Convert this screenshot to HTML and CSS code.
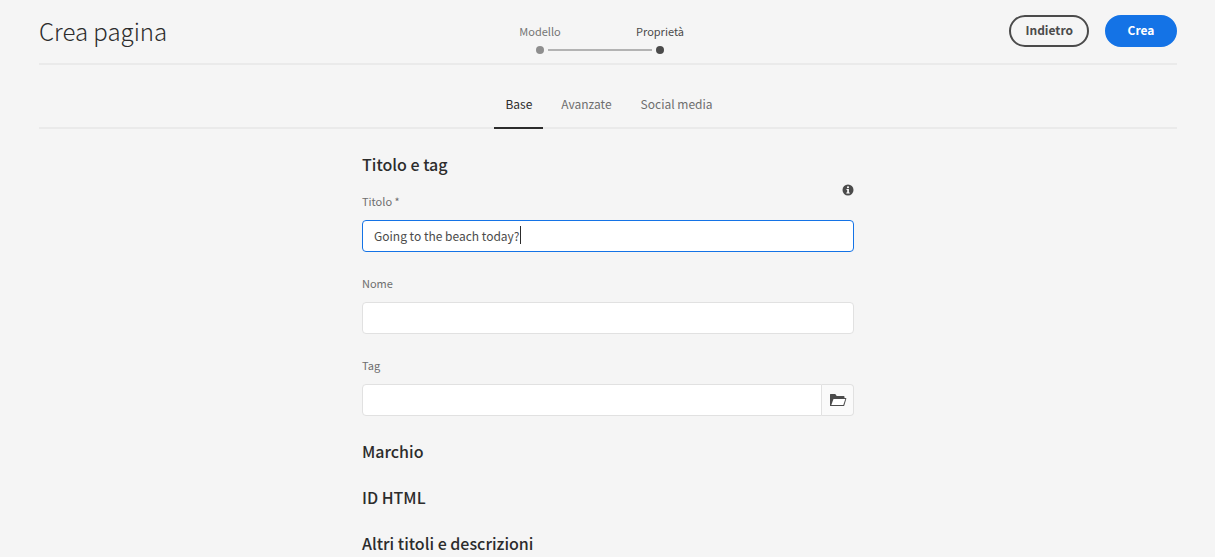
FILE: index.html
```
<!DOCTYPE html>
<html lang="it">
<head>
<meta charset="utf-8">
<meta name="viewport" content="width=device-width, initial-scale=1">
<title>Crea pagina</title>
<link rel="stylesheet" href="styles.css">
</head>
<body>
<div class="shell">
  <header class="header">
    <h1 class="page-title">Crea pagina</h1>
    <ol class="steps">
      <li class="step step-done"><span class="step-label">Modello</span><span class="step-dot"></span></li>
      <li class="step step-current" aria-current="step"><span class="step-label">Proprietà</span><span class="step-dot"></span></li>
    </ol>
    <div class="actions">
      <button class="button button-secondary" type="button">Indietro</button>
      <button class="button button-primary" type="submit" form="page-form">Crea</button>
    </div>
  </header>
  <nav class="tabs" role="tablist" aria-label="Proprietà pagina">
    <button class="tab tab-active" type="button" role="tab" aria-selected="true">Base</button>
    <button class="tab" type="button" role="tab" aria-selected="false">Avanzate</button>
    <button class="tab" type="button" role="tab" aria-selected="false">Social media</button>
  </nav>
  <main>
    <form class="form" id="page-form">
      <h2 class="section-title">Titolo e tag</h2>
      <div class="field field-title">
        <div class="label-row">
          <label class="label" for="title">Titolo *</label>
          <button class="info" type="button" aria-label="Informazioni">
            <svg class="info-icon" viewBox="0 0 12 12" aria-hidden="true"><circle cx="6" cy="6" r="5.5" fill="#4b4b4b"/><circle cx="6" cy="3.2" r="1.05" fill="#fff"/><path d="M4.5 4.9h2.4v3.5h.8v1H4.3v-1h.9V5.9h-.7z" fill="#fff"/></svg>
          </button>
        </div>
        <div class="input-wrap">
          <input class="input" id="title" type="text" value="Going to the beach today?" autofocus>
          <span class="caret" aria-hidden="true"></span>
        </div>
      </div>
      <div class="field">
        <label class="label" for="name">Nome</label>
        <input class="input" id="name" type="text">
      </div>
      <div class="field field-last">
        <label class="label" for="tag">Tag</label>
        <div class="input-group">
          <input class="input" id="tag" type="text">
          <button class="browse" type="button" aria-label="Sfoglia">
            <svg class="browse-icon" viewBox="0 0 18 14" aria-hidden="true"><path fill="#4b4b4b" d="M1 13V1.500Q1 1 1.500 1h4.300q.4 0 .7.300L7.700 3h7q.8 0 .8.800V5h1.300q.7 0 .5.700L15.300 12.400q-.2.600-.8.600z"/><path fill="#fff" d="M4.500 6 2.300 12h12l2-6z"/></svg>
          </button>
        </div>
      </div>
      <h2 class="section-title">Marchio</h2>
      <h2 class="section-title">ID HTML</h2>
      <h2 class="section-title">Altri titoli e descrizioni</h2>
    </form>
  </main>
</div>
</body>
</html>
```
FILE: styles.css
```
* { box-sizing: border-box; }

body {
  margin: 0;
  background: #f5f5f5;
  color: #4b4b4b;
  font-family: "Noto Sans CJK SC", "Noto Sans", sans-serif;
  font-size: 12px;
  line-height: 20px;
  overflow: hidden;
}

button, input { font: inherit; color: inherit; }
button { cursor: pointer; }

.shell { padding: 0 38px 0 39px; }

.header {
  display: grid;
  grid-template-columns: 1fr 256px 1fr;
  align-items: center;
  height: 65px;
  border-bottom: 2px solid #eaeaea;
}

.page-title {
  margin: 0;
  padding-bottom: 2px;
  color: #2c2c2c;
  font-size: 24px;
  font-weight: 300;
  line-height: 32px;
}

.steps {
  display: flex;
  margin: 0;
  padding: 14px 16px 0 0;
  list-style: none;
}

.step {
  position: relative;
  display: flex;
  flex: 1;
  flex-direction: column;
  align-items: center;
  gap: 7px;
  font-size: 11px;
  line-height: 16px;
}

.step-done { color: #747474; }

.step-dot {
  width: 8px;
  height: 8px;
  border-radius: 50%;
  background: #4b4b4b;
}

.step-done .step-dot { background: #8e8e8e; }

.step-done::after {
  content: "";
  position: absolute;
  bottom: 3px;
  left: calc(50% + 8px);
  width: calc(100% - 16px);
  height: 2px;
  background: #b3b3b3;
}

.actions {
  display: flex;
  justify-content: flex-end;
  gap: 16px;
  padding-bottom: 2px;
}

.button {
  height: 32px;
  padding: 0 14px 2px;
  border: 2px solid #4b4b4b;
  border-radius: 16px;
  background: transparent;
  font-weight: 700;
  line-height: 20px;
}

.button-primary {
  min-width: 72px;
  border-color: #1473e6;
  background: #1473e6;
  color: #fff;
}

.tabs {
  display: flex;
  justify-content: center;
  gap: 7px;
  height: 64px;
  padding-left: 2px;
  border-bottom: 2px solid #eaeaea;
}

.tab {
  height: 64px;
  padding: 16px 11px 0;
  border: 0;
  border-bottom: 2px solid transparent;
  background: transparent;
  color: #6e6e6e;
}

.tab-active {
  border-color: #2c2c2c;
  color: #2c2c2c;
}

.form {
  width: 492px;
  max-width: 100%;
  margin: 0 auto;
  padding-top: 24px;
}

.section-title {
  margin: 0 0 24px;
  color: #2c2c2c;
  font-size: 16px;
  font-weight: 500;
  line-height: 22px;
}

.field { margin-bottom: 23px; }
.field-title { margin-top: -16px; }
.field-last { margin-bottom: 24px; }

.label-row {
  display: flex;
  align-items: flex-end;
  justify-content: space-between;
}

.label {
  display: block;
  padding-bottom: 11px;
  color: #6e6e6e;
  font-size: 11px;
  line-height: 16px;
}

.info {
  display: flex;
  padding: 1px 0 24px;
  border: 0;
  background: transparent;
}

.info-icon { width: 12px; height: 12px; }

.input-wrap { position: relative; }

.input {
  display: block;
  width: 100%;
  height: 32px;
  padding: 0 11px 2px;
  border: 1px solid #e1e1e1;
  border-radius: 4px;
  outline: 0;
  background: #fff;
}

.input:focus { border-color: #1473e6; }

.caret {
  position: absolute;
  top: 6px;
  left: 158px;
  width: 1px;
  height: 18px;
  background: #2c2c2c;
}

.input-group { display: flex; }

.input-group .input {
  flex: 1;
  border-radius: 4px 0 0 4px;
}

.browse {
  display: flex;
  align-items: center;
  justify-content: center;
  width: 32px;
  padding: 0;
  border: 1px solid #e1e1e1;
  border-left: 0;
  border-radius: 0 4px 4px 0;
  background: #fafafa;
}

.browse-icon { width: 18px; height: 14px; }
```
